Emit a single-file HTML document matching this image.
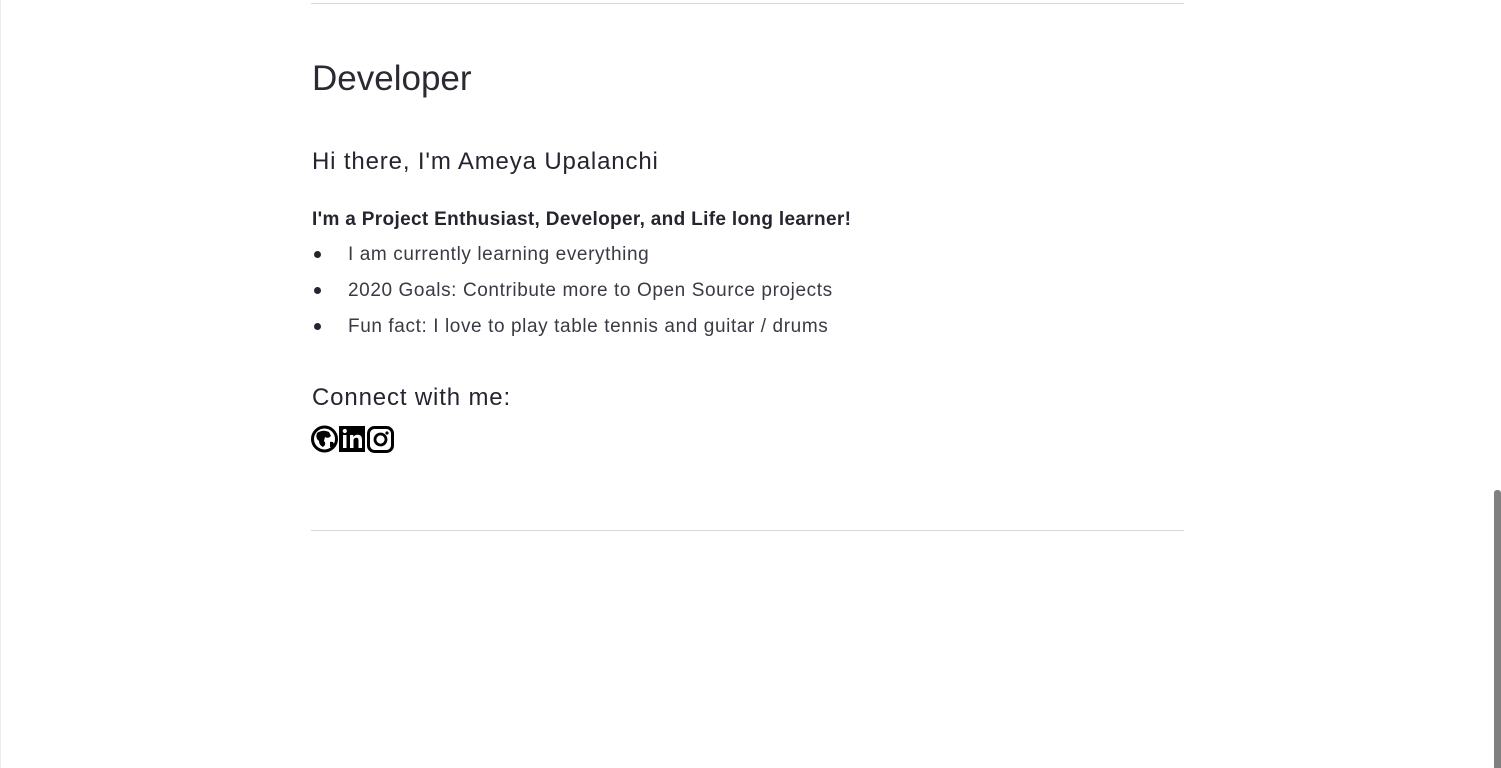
<!DOCTYPE html>
<html><head><meta charset="utf-8"><style>
html,body{margin:0;padding:0;width:1501px;height:768px;overflow:hidden;background:#fff;font-family:"Liberation Sans",sans-serif;color:#25252f}
.hr{position:absolute;left:311px;width:873px;height:1px;background:#d8d8de}
.t{position:absolute;left:312px;white-space:nowrap}
.sb{position:absolute;left:1494px;top:490px;width:7px;height:278px;background:#808080;border-radius:3px 3px 0 0}
.edge{position:absolute;left:0;top:0;width:1px;height:768px;background:#ececec}
.b{position:absolute;left:314px;width:7px;height:7px;border-radius:50%;background:#25252f}
.li{left:348px;font-size:19px;color:#3a3a44;letter-spacing:0.6px}
</style></head><body>
<div class="edge"></div>
<div class="hr" style="top:3px"></div>
<div class="t" style="top:59px;font-size:35px;color:#2a2a33">Developer</div>
<div class="t" style="top:148px;font-size:24px;letter-spacing:0.85px">Hi there, I'm Ameya Upalanchi</div>
<div class="t" style="top:209px;font-size:19px;font-weight:bold;letter-spacing:0.33px">I'm a Project Enthusiast, Developer, and Life long learner!</div>
<div class="b" style="top:251px"></div><div class="t li" style="top:244px">I am currently learning everything</div>
<div class="b" style="top:287px"></div><div class="t li" style="top:280px">2020 Goals: Contribute more to Open Source projects</div>
<div class="b" style="top:323px"></div><div class="t li" style="top:316px">Fun fact: I love to play table tennis and guitar / drums</div>
<div class="t" style="top:384px;font-size:24px;letter-spacing:0.85px">Connect with me:</div>
<svg style="position:absolute;left:311px;top:425px" width="84" height="28" viewBox="0 0 84 28">
<circle cx="13.5" cy="14" r="12" fill="none" stroke="#000" stroke-width="3"/>
<path d="M6 8 Q12 4 18 7 L20 11 Q17 14 14 12 L13 16 Q16 19 12 22 Q8 20 8 16 Q4 13 6 8Z M19 17 Q23 16 23 20 Q21 23 19 22Z" fill="#000"/>
<rect x="28" y="1" width="26" height="26" fill="#000"/>
<rect x="32" y="10" width="3.5" height="13" fill="#fff"/><circle cx="33.8" cy="6" r="2.1" fill="#fff"/>
<path d="M39 10h3.3v2c1-1.6 2.6-2.3 4.3-2.3 3 0 4.4 1.8 4.4 5V23h-3.5v-7.5c0-1.8-.7-2.7-2.1-2.7-1.6 0-2.9 1-2.9 3V23H39z" fill="#fff"/>
<rect x="57.5" y="2.5" width="24" height="24" rx="6" fill="none" stroke="#000" stroke-width="3"/>
<circle cx="69.5" cy="14.5" r="5.5" fill="none" stroke="#000" stroke-width="2.8"/>
<circle cx="76" cy="8" r="1.6" fill="#000"/>
</svg>
<div class="hr" style="top:530px"></div>
<div class="sb"></div>
</body></html>
